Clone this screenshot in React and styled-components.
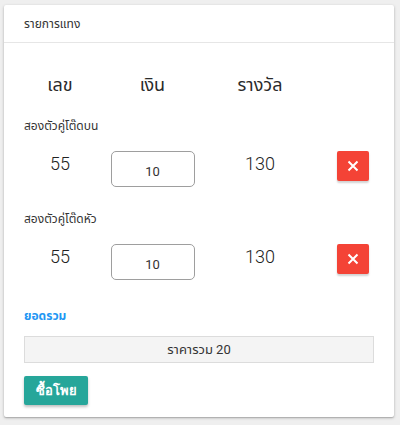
import React from 'react';
import styled, { createGlobalStyle } from 'styled-components';

const GlobalStyle = createGlobalStyle`
  html, body {
    margin: 0;
    padding: 0;
    background: #efefef;
    font-family: Roboto, "Noto Sans", "Noto Sans Thai", "DejaVu Sans", sans-serif;
    color: #333;
  }
`;

const bets = [
  { type: 'สองตัวคู่โต๊ดบน', number: '55', amount: '10', prize: '130' },
  { type: 'สองตัวคู่โต๊ดหัว', number: '55', amount: '10', prize: '130' },
];

export default function App() {
  return (
    <>
      <GlobalStyle />
      <Page>
        <Card>
          <CardHeader>รายการแทง</CardHeader>
          <CardBody>
            <HeadRow>
              <HeadCell>เลข</HeadCell>
              <HeadCell>เงิน</HeadCell>
              <HeadCell>รางวัล</HeadCell>
            </HeadRow>
            {bets.map((bet, i) => (
              <BetBlock key={i}>
                <BetType>{bet.type}</BetType>
                <BetRow>
                  <Value>{bet.number}</Value>
                  <AmountInput type="text" defaultValue={bet.amount} />
                  <Value>{bet.prize}</Value>
                  <DeleteButton>
                    <svg width="12" height="12" viewBox="0 0 12 12">
                      <path d="M1.5 1.5 L10.5 10.5 M10.5 1.5 L1.5 10.5" stroke="#fff" strokeWidth="2" />
                    </svg>
                  </DeleteButton>
                </BetRow>
              </BetBlock>
            ))}
            <TotalLabel>ยอดรวม</TotalLabel>
            <TotalBar>ราคารวม 20</TotalBar>
            <BuyButton>ซื้อโพย</BuyButton>
          </CardBody>
        </Card>
      </Page>
    </>
  );
}

const Page = styled.div`
  padding: 5px 6px 8px 4px;
`;

const Card = styled.div`
  background: #fff;
  box-shadow: 0 1px 3px rgba(0, 0, 0, 0.25), 0 1px 1px rgba(0, 0, 0, 0.12);
  border-radius: 2px;
`;

const CardHeader = styled.div`
  padding: 11px 20px 10px;
  font-size: 12px;
  line-height: 16px;
  color: #333;
  border-bottom: 1px solid #e6e6e6;
`;

const CardBody = styled.div`
  padding: 29px 20px 12px;
`;

const HeadRow = styled.div`
  display: grid;
  grid-template-columns: 72px 113px 102px;
`;

const HeadCell = styled.div`
  text-align: center;
  font-size: 18px;
  line-height: 26px;
  color: #2a2a2a;
`;

const BetBlock = styled.div`
  margin-top: 20px;
`;

const BetType = styled.div`
  font-size: 12px;
  line-height: 16px;
  color: #333;
`;

const BetRow = styled.div`
  display: grid;
  grid-template-columns: 72px 113px 102px 1fr;
  align-items: start;
  margin-top: 17px;
  height: 40px;
`;

const Value = styled.div`
  text-align: center;
  font-size: 18px;
  line-height: 26px;
  font-weight: 300;
  color: #222;
`;

const AmountInput = styled.input`
  justify-self: center;
  box-sizing: border-box;
  width: 84px;
  height: 36px;
  border: 1.5px solid #9e9e9e;
  border-radius: 5px;
  font-family: Roboto, "Noto Sans", sans-serif;
  font-size: 13px;
  color: #333;
  text-align: center;
  padding: 4px 0 0;
  outline: none;
`;

const DeleteButton = styled.button`
  justify-self: end;
  margin-right: 5px;
  width: 32px;
  height: 30px;
  border: none;
  border-radius: 2px;
  background: #f44336;
  box-shadow: 0 2px 2px rgba(0, 0, 0, 0.18);
  display: flex;
  align-items: center;
  justify-content: center;
  padding: 0;
  cursor: pointer;
`;

const TotalLabel = styled.div`
  margin-top: 24px;
  font-size: 12px;
  line-height: 16px;
  font-weight: bold;
  color: #2196f3;
`;

const TotalBar = styled.div`
  margin-top: 12px;
  height: 27px;
  box-sizing: border-box;
  border: 1px solid #dcdcdc;
  background: #f4f4f4;
  display: flex;
  align-items: center;
  justify-content: center;
  font-size: 13px;
  color: #333;
`;

const BuyButton = styled.button`
  margin-top: 13px;
  width: 64px;
  height: 29px;
  border: none;
  border-radius: 2px;
  background: #26a69a;
  color: #fff;
  font-family: Roboto, "Noto Sans", sans-serif;
  font-size: 13px;
  font-weight: bold;
  box-shadow: 0 2px 3px rgba(0, 0, 0, 0.25);
  cursor: pointer;
`;
